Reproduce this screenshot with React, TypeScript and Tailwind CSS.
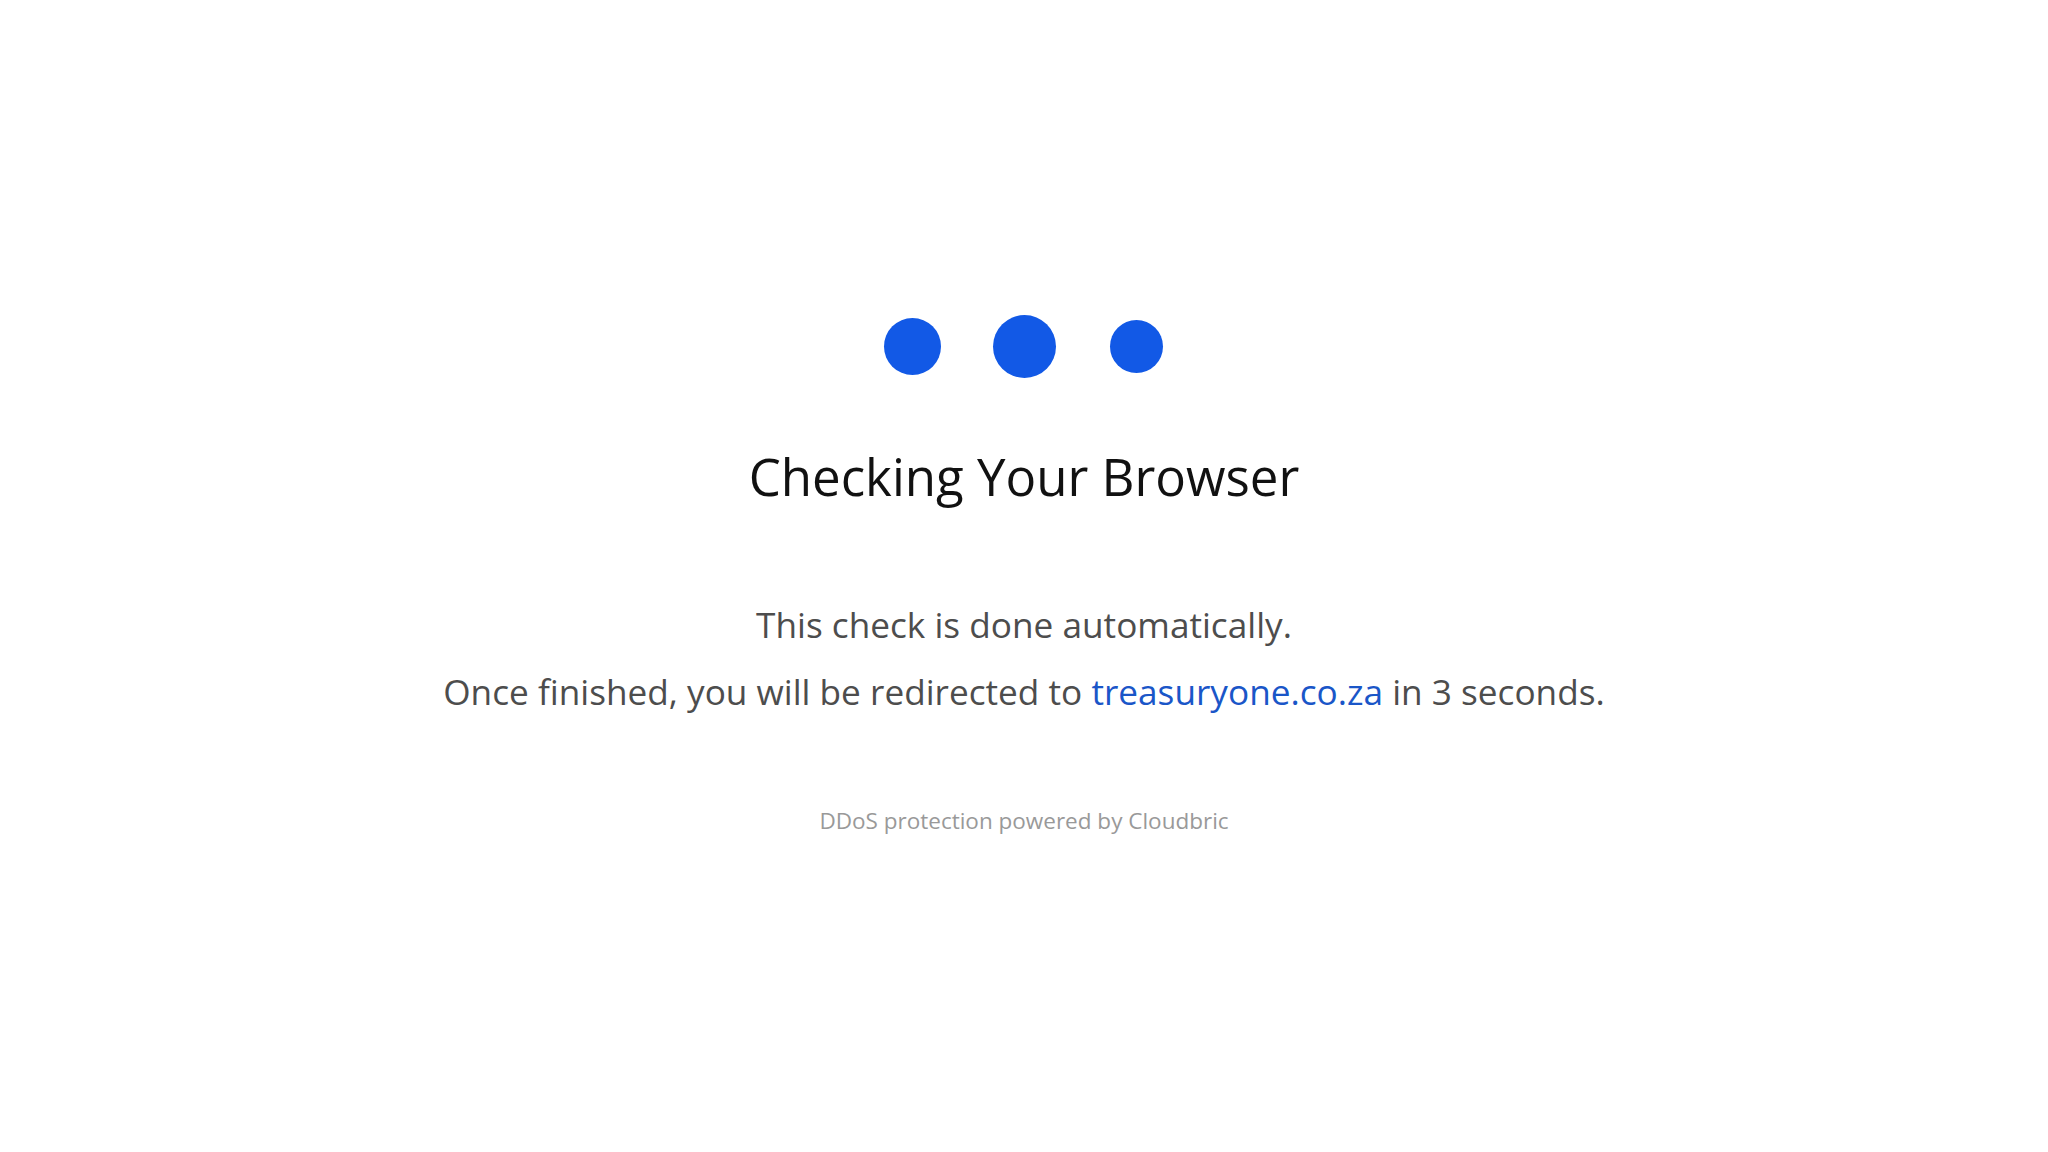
export default function App() {
  const dots = [
    { size: "w-[57px] h-[57px]" },
    { size: "w-[63px] h-[63px]" },
    { size: "w-[53px] h-[53px]" },
  ];

  return (
    <div className="flex min-h-screen w-full flex-col items-center justify-center bg-white font-['Open_Sans',sans-serif]">
      {/* loader dots */}
      <div className="flex h-[63px] items-center">
        {dots.map((d, i) => (
          <div key={i} className="flex w-[112px] justify-center">
            <div className={`${d.size} rounded-full bg-[#1259e6]`} />
          </div>
        ))}
      </div>

      <h1 className="mt-[63px] text-[51px] leading-[70px] text-[#111111]">
        Checking Your Browser
      </h1>

      <div className="mt-[80px] text-center text-[35.2px] leading-[67px] text-[#4d4d4d]">
        <p>This check is done automatically.</p>
        <p>
          Once finished, you will be redirected to{" "}
          <a href="#" className="text-[#1a56c8]">
            treasuryone.co.za
          </a>{" "}
          in 3 seconds.
        </p>
      </div>

      <p className="mt-[80px] text-[22.5px] leading-[32px] text-[#999999]">
        DDoS protection powered by Cloudbric
      </p>
    </div>
  );
}
